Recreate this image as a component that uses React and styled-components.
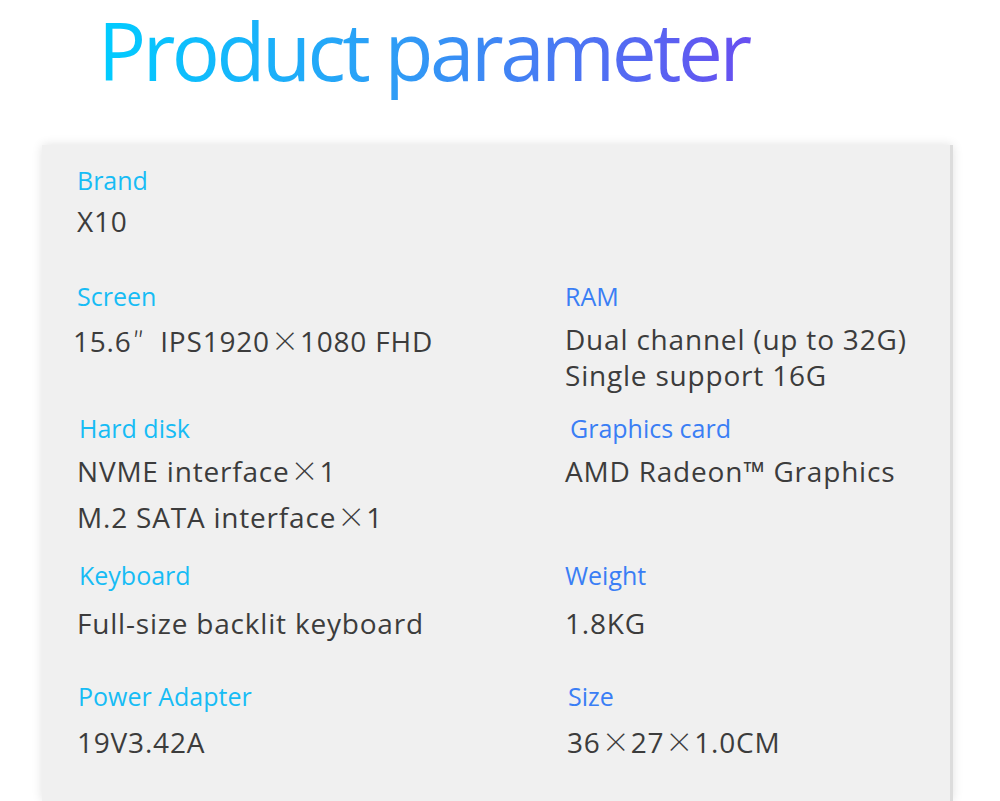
import React from 'react'
import styled, { createGlobalStyle } from 'styled-components'

const GlobalStyle = createGlobalStyle`
  html, body {
    margin: 0;
    padding: 0;
    background: #fff;
    overflow: hidden;
  }
  body {
    font-family: 'Open Sans', 'Noto Sans', sans-serif;
  }
`

const Page = styled.div`
  width: 1000px;
  height: 801px;
  overflow: hidden;
  background: #fff;
`

const Header = styled.header`
  height: 145px;
  padding-left: 98px;
  box-sizing: border-box;
  overflow: hidden;
`

const Title = styled.h1`
  margin: 0;
  display: inline-block;
  padding: 0 14px 16px 0;
  font-size: 80px;
  font-weight: 400;
  line-height: 100px;
  letter-spacing: -3.5px;
  background: linear-gradient(90deg, #00ccff 0%, #2f9cf6 45%, #6a4cf0 100%);
  -webkit-background-clip: text;
  background-clip: text;
  color: transparent;
`

const Panel = styled.section`
  margin-left: 42px;
  width: 911px;
  height: 656px;
  box-sizing: border-box;
  padding: 20px 0 0 35px;
  background: #f0f0f0;
  border-right: 3px solid #dcdcdc;
  box-shadow: 0 0 10px rgba(0, 0, 0, 0.12);
`

const Row = styled.div`
  display: grid;
  grid-template-columns: 488px 1fr;
  margin-top: ${p => p.$top || 0}px;
`

const Cell = styled.div`
  display: flex;
  flex-direction: column;
`

const Label = styled.div`
  font-size: 25px;
  line-height: 30px;
  color: ${p => (p.$right ? '#3a7ef5' : '#17bcf5')};
  margin-left: ${p => p.$nudge || 0}px;
`

const Value = styled.div`
  margin-top: ${p => p.$gap || 0}px;
  font-size: 28px;
  line-height: ${p => p.$lh || 40}px;
  color: #3c3c3c;
  letter-spacing: 0.8px;
  margin-left: ${p => p.$nudge || 0}px;
  white-space: nowrap;
`

// wide multiplication sign / inch mark as in the original artwork
const Wide = styled.span`
  font-family: 'Noto Sans CJK JP', 'Open Sans', sans-serif;
  font-weight: 300;
  line-height: 0;
  letter-spacing: 0;
  margin: 0 ${p => p.$before || 1}px 0 ${p => p.$after || 1}px;
`

const renderLine = line =>
  line.split(/(×|″)/).map((part, i) => {
    if (part === '×') return <Wide key={i}>×</Wide>
    if (part === '″') return <Wide key={i} $before={0} $after={0} style={{ marginRight: 16 }}>″</Wide>
    return part
  })

const rows = [
  {
    top: 0,
    cells: [{ label: 'Brand', gap: 6, lines: ['X10'] }],
  },
  {
    top: 40,
    cells: [
      { label: 'Screen', gap: 10, lines: ['15.6″IPS1920×1080 FHD'], valueNudge: -4 },
      { label: 'RAM', gap: 10, lh: 36, lines: ['Dual channel (up to 32G)', 'Single support 16G'] },
    ],
  },
  {
    top: 20,
    cells: [
      { label: 'Hard disk', labelNudge: 2, gap: 5, lh: 46, lines: ['NVME interface×1', 'M.2 SATA interface×1'] },
      { label: 'Graphics card', labelNudge: 5, gap: 5, lh: 46, lines: ['AMD Radeon™ Graphics'] },
    ],
  },
  {
    top: 20,
    cells: [
      { label: 'Keyboard', labelNudge: 2, gap: 13, lines: ['Full-size backlit keyboard'] },
      { label: 'Weight', gap: 13, lines: ['1.8KG'] },
    ],
  },
  {
    top: 38,
    cells: [
      { label: 'Power Adapter', labelNudge: 1, gap: 11, lines: ['19V3.42A'] },
      { label: 'Size', labelNudge: 3, gap: 11, lines: ['36×27×1.0CM'], valueNudge: 2 },
    ],
  },
]

export default function App() {
  return (
    <Page>
      <GlobalStyle />
      <Header>
        <Title>Product parameter</Title>
      </Header>
      <Panel>
        {rows.map((row, i) => (
          <Row key={i} $top={row.top}>
            {row.cells.map((cell, j) => (
              <Cell key={cell.label}>
                <Label $right={j === 1} $nudge={cell.labelNudge}>
                  {cell.label}
                </Label>
                {cell.lines.map((line, k) => (
                  <Value key={line} $gap={k === 0 ? cell.gap : 0} $lh={cell.lh} $nudge={cell.valueNudge}>
                    {renderLine(line)}
                  </Value>
                ))}
              </Cell>
            ))}
          </Row>
        ))}
      </Panel>
    </Page>
  )
}
